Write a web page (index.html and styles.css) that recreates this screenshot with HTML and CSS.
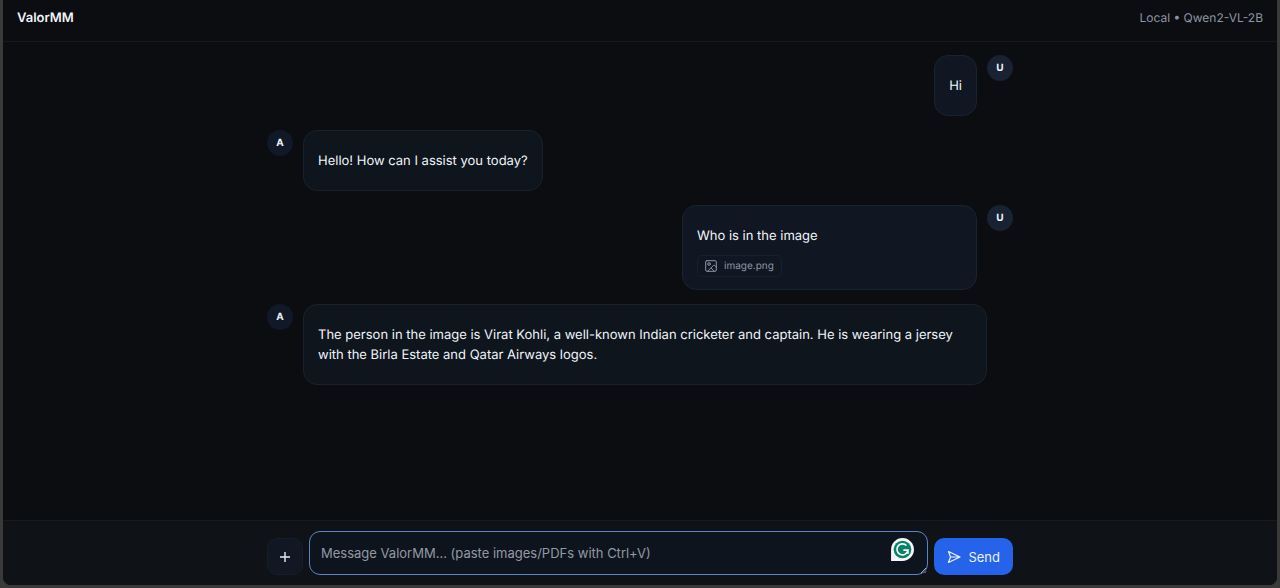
FILE: index.html
```html
<!DOCTYPE html>
<html lang="en">
<head>
<meta charset="utf-8">
<meta name="viewport" content="width=device-width, initial-scale=1">
<title>ValorMM</title>
<link rel="stylesheet" href="styles.css">
</head>
<body>
<div class="app">
  <header class="topbar">
    <h1 class="brand">ValorMM</h1>
    <span class="model">Local • Qwen2-VL-2B</span>
  </header>
  <main class="chat">
    <div class="column messages">
      <article class="message message-user">
        <div class="bubble"><p>Hi</p></div>
        <div class="avatar">U</div>
      </article>
      <article class="message">
        <div class="avatar">A</div>
        <div class="bubble"><p>Hello! How can I assist you today?</p></div>
      </article>
      <article class="message message-user">
        <div class="bubble bubble-attachment">
          <p>Who is in the image</p>
          <div class="chip">
            <svg class="chip-icon" viewBox="0 0 12 12" fill="none" stroke="currentColor" stroke-linecap="round" stroke-linejoin="round" aria-hidden="true"><rect x=".7" y=".7" width="10.6" height="10.6" rx="1.2"/><circle cx="4" cy="4" r="1.3"/><path d="M11.3 7L9.7 5.5a1 1 0 0 0-1.4 0L2.6 11.3M6.3 8.2l3 3"/></svg>
            <span>image.png</span>
          </div>
        </div>
        <div class="avatar">U</div>
      </article>
      <article class="message">
        <div class="avatar">A</div>
        <div class="bubble"><p>The person in the image is Virat Kohli, a well-known Indian cricketer and captain. He is wearing a jersey with the Birla Estate and Qatar Airways logos.</p></div>
      </article>
    </div>
  </main>
  <footer class="composer">
    <form class="column composer-form">
      <button class="attach" type="button" aria-label="Add files">
        <svg class="attach-icon" viewBox="0 0 12 12" fill="none" stroke="currentColor" stroke-width="1.4" aria-hidden="true"><path d="M6 1v10M1 6h10"/></svg>
      </button>
      <div class="field">
        <textarea class="input" rows="1" aria-label="Message" placeholder="Message ValorMM... (paste images/PDFs with Ctrl+V)"></textarea>
        <svg class="assistant" viewBox="0 0 24 24" fill="none" aria-hidden="true"><path d="M1 23V12A11 11 0 1 1 12 23Z" fill="#f4f7f8"/><circle cx="12" cy="12" r="8.5" fill="#0b806b"/><path d="M15.8 8.2A5.3 5.3 0 1 0 17.2 12.6H12.8M17.2 12.6V16" stroke="#fff" stroke-width="1.6"/></svg>
        <svg class="grip" viewBox="0 0 8 8" fill="none" stroke="#b8bec8" aria-hidden="true"><path d="M1 7l6-6M5 7l2-2"/></svg>
      </div>
      <button class="send" type="submit">
        <svg class="send-icon" viewBox="0 0 14 14" fill="none" stroke="currentColor" stroke-width="1.2" stroke-linejoin="round" aria-hidden="true"><path d="M1.5 1.5L13 7 1.5 12.5 3.5 7ZM3.5 7H13"/></svg>
        <span>Send</span>
      </button>
    </form>
  </footer>
</div>
</body>
</html>
```
FILE: styles.css
```css
* { box-sizing: border-box; }

body {
  margin: 0;
  padding: 0 3px 3px;
  background: #3a3a3b;
  color: #f0f4fa;
  font-family: Inter, "Liberation Sans", sans-serif;
  font-size: 13px;
  line-height: 20px;
  text-rendering: geometricPrecision;
}

.app {
  display: flex;
  flex-direction: column;
  min-height: calc(100vh - 3px);
  overflow: hidden;
  border-radius: 0 0 8px 8px;
  background: #0b0d10;
}

.topbar {
  display: flex;
  align-items: center;
  justify-content: space-between;
  padding: 8px 14px 13px;
  border-bottom: 1px solid #15191f;
}

.brand {
  margin: 0;
  font-size: 13px;
  font-weight: 600;
}

.model {
  color: #8b95a5;
  font-size: 12px;
}

.chat {
  flex: 1;
  padding: 13px;
}

.column {
  width: 100%;
  max-width: 746px;
  margin: 0 auto;
}

.messages {
  display: flex;
  flex-direction: column;
  gap: 14px;
}

.message {
  display: flex;
  align-items: flex-start;
  gap: 10px;
}

.message-user { justify-content: flex-end; }

.avatar {
  display: grid;
  flex: none;
  place-items: center;
  width: 26px;
  height: 26px;
  border-radius: 50%;
  background: #111827;
  font-size: 10px;
  font-weight: 700;
}

.message-user .avatar { background: #182232; }

.bubble {
  max-width: 684px;
  padding: 20px 14px 19px;
  border: 1px solid #19222c;
  border-radius: 14px;
  background: #0e151d;
}

.message-user .bubble {
  border-color: #182331;
  background: #101722;
}

.bubble p { margin: 0; }

.message-user .bubble-attachment {
  min-width: 295px;
  padding-bottom: 12px;
}

.chip {
  display: inline-flex;
  align-items: center;
  gap: 7px;
  margin-top: 9px;
  padding: 0 7px;
  border: 1px solid #152130;
  border-radius: 5px;
  color: #8b95a5;
  font-size: 10px;
  vertical-align: top;
}

.chip-icon {
  width: 12px;
  height: 12px;
}

.composer {
  padding: 10px 13px;
  border-top: 1px solid #171b21;
  background: #0f1216;
}

.composer-form {
  display: flex;
  align-items: flex-end;
  gap: 6px;
}

.attach,
.send {
  display: flex;
  flex: none;
  align-items: center;
  justify-content: center;
  height: 37px;
  padding: 0;
  border-radius: 10px;
  font: inherit;
}

.attach {
  width: 36px;
  border: 1px solid #171e29;
  background: #121823;
  color: #e8edf4;
}

.attach-icon {
  width: 12px;
  height: 12px;
}

.field {
  position: relative;
  display: flex;
  flex: 1;
}

.input {
  width: 100%;
  height: 44px;
  padding: 11px;
  border: 1px solid #5f82c6;
  border-radius: 11px;
  outline: none;
  background: #0e141d;
  color: #e8edf4;
  font: inherit;
  resize: none;
}

.input::placeholder {
  color: #9299a5;
  opacity: 1;
}

.assistant {
  position: absolute;
  top: 6px;
  right: 13px;
  width: 25px;
  height: 25px;
}

.grip {
  position: absolute;
  right: 1px;
  bottom: 1px;
  width: 7px;
  height: 7px;
}

.send {
  gap: 7px;
  padding: 0 13px;
  border: 0;
  background: #2563eb;
  color: #eef3ff;
}

.send-icon {
  width: 14px;
  height: 14px;
}
```
